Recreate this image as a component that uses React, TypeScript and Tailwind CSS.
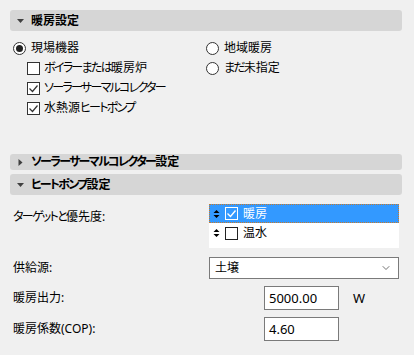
import { ChevronDown } from "lucide-react";

const FONT = { fontFamily: '"Segoe UI", "Noto Sans", "Noto Sans CJK JP", sans-serif' };

// kana in the original UI font are much narrower than in Noto CJK, so squeeze them
function jp(text: string) {
    return text.split(/([\u3040-\u30ff]+)/).map((part, i) =>
        /[\u3040-\u30ff]/.test(part) ? (
            <span key={i} className="tracking-[-1.7px]">{part}</span>
        ) : (
            <span key={i}>{part}</span>
        )
    );
}

function Header({ title, open, h = "h-[21px]" }: { title: string; open: boolean; h?: string }) {
    return (
        <div className={`${h} bg-[#d6d6d6] rounded-[3px] flex items-center pl-[6px] gap-[6px] text-[12px] font-bold text-black`}>
            <svg width="9" height="9" viewBox="0 0 9 9" className="text-[#404040]">
                {open ? <path d="M1 3h7L4.5 7z" fill="currentColor" /> : <path d="M2.5 1v7L6.5 4.5z" fill="currentColor" />}
            </svg>
            <span>{jp(title)}</span>
        </div>
    );
}

function Radio({ checked, label }: { checked?: boolean; label: string }) {
    return (
        <div className="h-[20px] flex items-center gap-[5px]">
            <span className="w-[13px] h-[13px] rounded-full border border-[#333] bg-white flex items-center justify-center">
                {checked && <span className="w-[7px] h-[7px] rounded-full bg-[#222]" />}
            </span>
            <span>{jp(label)}</span>
        </div>
    );
}

function Check({ checked, label }: { checked?: boolean; label: string }) {
    return (
        <div className="h-[20px] flex items-center gap-[4px]">
            <span className="w-[13px] h-[13px] border border-[#333] bg-white flex items-center justify-center">
                {checked && (
                    <svg width="11" height="11" viewBox="0 0 11 11">
                        <path d="M1.5 5.5l3 3 5-6" stroke="#333" strokeWidth="1.2" fill="none" />
                    </svg>
                )}
            </span>
            <span>{jp(label)}</span>
        </div>
    );
}

function SortIcon({ color = "#000" }: { color?: string }) {
    return (
        <svg width="7" height="10" viewBox="0 0 7 10">
            <path d="M0.5 4L3.5 1l3 3z M0.5 6l3 3 3-3z" fill={color} />
        </svg>
    );
}

export default function App() {
    return (
        <div className="w-[414px] h-[355px] bg-[#f0f0f0] text-[12px] text-black overflow-hidden pl-[10px] pr-[12px] pt-[10px] [font-feature-settings:'palt']" style={FONT}>
            <Header title="暖房設定" open />

            {/* heating system choice */}
            <div className="grid grid-cols-[196px_1fr] mt-[7px] leading-none">
                <div className="pl-[3px]">
                    <Radio checked label="現場機器" />
                    <div className="pl-[14px]">
                        <Check label="ボイラーまたは暖房炉" />
                        <Check checked label="ソーラーサーマルコレクター" />
                        <Check checked label="水熱源ヒートポンプ" />
                    </div>
                </div>
                <div>
                    <Radio label="地域暖房" />
                    <Radio label="まだ未指定" />
                </div>
            </div>

            <div className="mt-[36px]">
                <Header title="ソーラーサーマルコレクター設定" open={false} h="h-[16px]" />
            </div>
            <div className="mt-[4px]">
                <Header title="ヒートポンプ設定" open />
            </div>

            {/* heat pump fields */}
            <div className="grid grid-cols-[196px_190px] mt-[9px] pl-[3px] leading-none">
                <div className="pt-[7px]">{jp("ターゲットと優先度:")}</div>
                <div className="bg-white h-[44px]">
                    <div className="h-[19px] bg-[#3399ff] outline-1 outline-dotted outline-[#c87a2a] -outline-offset-1 flex items-center gap-[5px] pl-[4px] text-white">
                        <SortIcon />
                        <span className="w-[13px] h-[13px] border border-white flex items-center justify-center">
                            <svg width="11" height="11" viewBox="0 0 11 11">
                                <path d="M1.5 5.5l3 3 5-6" stroke="#fff" strokeWidth="1.4" fill="none" />
                            </svg>
                        </span>
                        <span>暖房</span>
                    </div>
                    <div className="h-[20px] flex items-center gap-[5px] pl-[4px]">
                        <SortIcon />
                        <span className="w-[13px] h-[13px] border border-[#222] bg-white" />
                        <span>温水</span>
                    </div>
                </div>

                <div className="mt-[9px] flex items-center h-[22px]">供給源:</div>
                <div className="mt-[9px] h-[22px] border border-[#7a7a7a] bg-white flex items-center justify-between pl-[5px] pr-[6px]">
                    <span>土壌</span>
                    <ChevronDown size={12} strokeWidth={1.5} className="text-[#444]" />
                </div>

                <div className="mt-[7px] h-[24px] flex items-center">暖房出力:</div>
                <div className="mt-[7px] h-[24px] flex items-center">
                    <div className="ml-[55px] w-[75px] h-[24px] border border-[#7a7a7a] bg-white flex items-center pl-[4px] text-[13px]">5000.00</div>
                    <span className="ml-[14px] text-[13px]">W</span>
                </div>

                <div className="mt-[7px] h-[24px] flex items-center">暖房係数(COP):</div>
                <div className="mt-[7px] h-[24px] flex items-center">
                    <div className="ml-[55px] w-[75px] h-[24px] border border-[#7a7a7a] bg-white flex items-center pl-[4px] text-[13px]">4.60</div>
                </div>
            </div>
        </div>
    );
}
